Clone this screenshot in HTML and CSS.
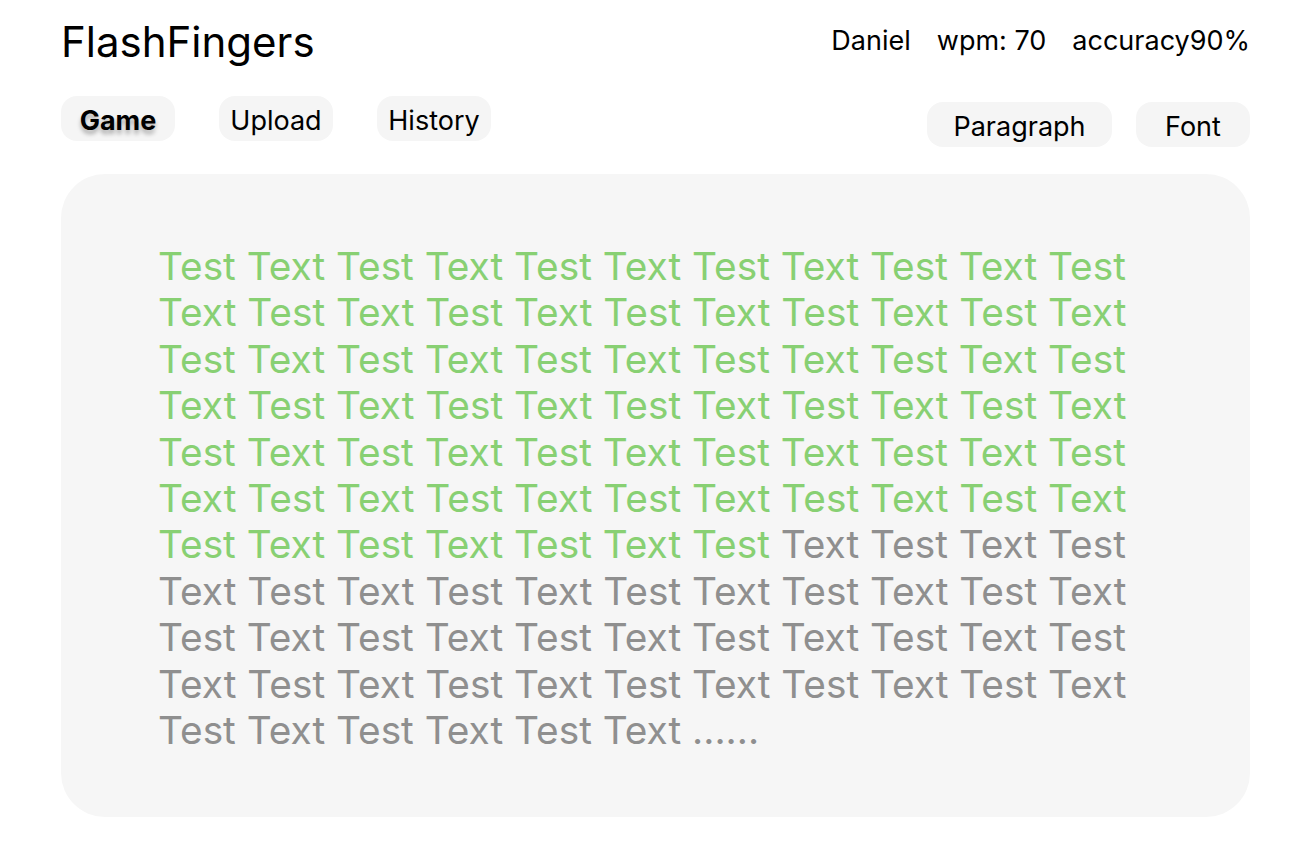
FILE: index.html
```html
<!DOCTYPE html>
<html>
<head>
<meta charset="utf-8">
<link rel="stylesheet" href="styles.css">
</head>
<body>
<div class="page">
  <header class="top">
    <div class="brand">FlashFingers</div>
    <div class="stats"><span>Daniel</span><span>wpm: 70</span><span>accuracy90%</span></div>
  </header>
  <nav class="bar">
    <div class="tabs">
      <div class="pill active">Game</div>
      <div class="pill">Upload</div>
      <div class="pill">History</div>
    </div>
    <div class="opts">
      <div class="pill wide">Paragraph</div>
      <div class="pill">Font</div>
    </div>
  </nav>
  <main class="card">
    <div class="text">
      <div class="line done">Test Text Test Text Test Text Test Text Test Text Test</div>
      <div class="line done">Text Test Text Test Text Test Text Test Text Test Text</div>
      <div class="line done">Test Text Test Text Test Text Test Text Test Text Test</div>
      <div class="line done">Text Test Text Test Text Test Text Test Text Test Text</div>
      <div class="line done">Test Text Test Text Test Text Test Text Test Text Test</div>
      <div class="line done">Text Test Text Test Text Test Text Test Text Test Text</div>
      <div class="line"><span class="done">Test Text Test Text Test Text Test</span> Text Test Text Test</div>
      <div class="line">Text Test Text Test Text Test Text Test Text Test Text</div>
      <div class="line">Test Text Test Text Test Text Test Text Test Text Test</div>
      <div class="line">Text Test Text Test Text Test Text Test Text Test Text</div>
      <div class="line">Test Text Test Text Test Text ......</div>
    </div>
  </main>
</div>
</body>
</html>
```
FILE: styles.css
```css
* { box-sizing: border-box; }
body {
  margin: 0;
  background: #ffffff;
  font-family: Inter, "Noto Sans", sans-serif;
  color: #000;
}
.page {
  padding: 16px 60px 0 61px;
}
.top {
  display: flex;
  justify-content: space-between;
  align-items: flex-start;
}
.brand {
  font-size: 42px;
  line-height: 52px;
}
.stats {
  display: flex;
  gap: 26px;
  font-size: 27px;
  line-height: 32px;
  padding-top: 9px;
}
.bar {
  display: flex;
  justify-content: space-between;
  margin-top: 28px;
}
.tabs {
  display: flex;
  gap: 44px;
}
.opts {
  display: flex;
  gap: 24px;
  padding-top: 6px;
}
.pill {
  background: #f5f5f5;
  border-radius: 16px;
  height: 45px;
  width: 114px;
  display: flex;
  align-items: center;
  justify-content: center;
  padding-top: 3px;
  font-size: 27px;
}
.pill.wide { width: 185px; }
.pill.active {
  font-weight: 700;
  text-shadow: 0 4px 4px rgba(0,0,0,0.3);
}
.card {
  margin-top: 27px;
  background: #f6f6f6;
  border-radius: 44px;
  height: 643px;
  padding: 69px 40px 0 97px;
}
.line {
  font-size: 38.8px;
  line-height: 46.4px;
  color: #8f8f8f;
  white-space: nowrap;
}
.done { color: #88d073; }
```
